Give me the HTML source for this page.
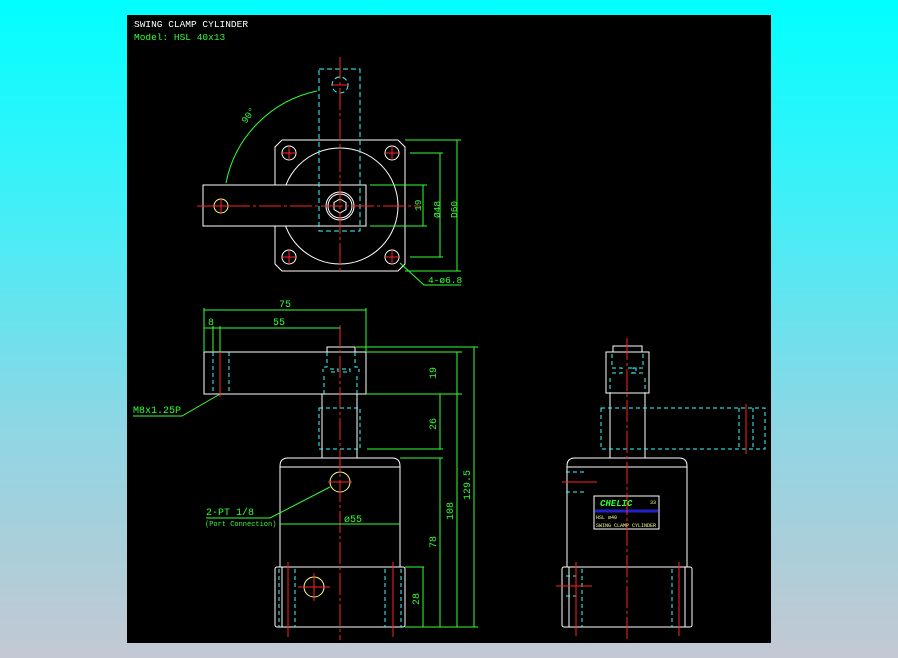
<!DOCTYPE html>
<html><head><meta charset="utf-8"><style>
html,body{margin:0;padding:0}
body{width:898px;height:658px;overflow:hidden;background:linear-gradient(180deg,#00ffff 0%,#3ff0f8 30%,#8fd6e4 65%,#b4ccd6 90%,#c4c8d4 100%)}
svg{position:absolute;left:0;top:0}
text{font-family:"Liberation Mono",monospace}
</style></head><body>
<svg width="898" height="658" viewBox="0 0 898 658" xmlns="http://www.w3.org/2000/svg">
<rect x="127" y="15" width="644" height="628" fill="#000"/>
<text x="134" y="27" fill="#fff" font-size="9.5">SWING CLAMP CYLINDER</text>
<text x="134" y="40" fill="#3f3" font-size="9.5">Model: HSL 40x13</text>

<g fill="none" stroke-width="1">
<!-- TOP VIEW -->
<g stroke="#fff">
<path d="M282 140 H398 L405 147 V264 L398 271 H282 L275 264 V147 Z"/>
<circle cx="340" cy="206" r="58"/>
<circle cx="289" cy="153" r="7"/><circle cx="392" cy="153" r="7"/>
<circle cx="289" cy="257" r="7"/><circle cx="392" cy="257" r="7"/>
<rect x="203" y="185" width="163" height="41" fill="#000"/>
<circle cx="340" cy="206" r="14"/><circle cx="340" cy="206" r="12"/>
<path d="M340 199 L346 202.5 V209.5 L340 213 L334 209.5 V202.5 Z"/>
</g>
<circle cx="221" cy="206" r="7" stroke="#ff8"/>
<g stroke="#3ff" stroke-dasharray="5,3">
<rect x="319" y="69" width="41" height="162"/>
<circle cx="340" cy="85" r="8"/>
</g>
<g stroke="#f22">
<path d="M340 57 V272" stroke-dasharray="22,3,3,3"/>
<path d="M197 206 H420" stroke-dasharray="22,3,3,3"/>
<path d="M282 153 H296 M289 146 V160 M385 153 H399 M392 146 V160 M282 257 H296 M289 250 V264 M385 257 H399 M392 250 V264 M214 206 H228 M221 198 V214 M332 85 H348"/>
</g>
<g stroke="#3f3">
<path d="M226 183 A117 117 0 0 1 317 91"/>
<path d="M370 185 H427 M370 226 H427 M423 185 V226 M410 153 H443 M410 257 H443 M440 153 V257 M405 140 H461 M405 271 H461 M457 140 V271"/>
<path d="M400 263 L424 285 H461"/>
</g>
<g fill="#3f3" font-size="9.5">
<text transform="translate(246,124) rotate(-55)">90°</text>
<text transform="translate(421,211) rotate(-90)">19</text>
<text transform="translate(440,218) rotate(-90)">Ø48</text>
<text transform="translate(457,218) rotate(-90)">D60</text>
<text x="428" y="283">4-ø6.8</text>
</g>

<!-- FRONT VIEW -->
<g stroke="#fff">
<rect x="204" y="352" width="162" height="42"/>
<path d="M327 352 V347 H355 V352"/>
<path d="M322 394 V458 M357 394 V458"/>
<path d="M280 567 V466 Q280 458 288 458 H392 Q400 458 400 466 V567 M280 467 H400"/>
<rect x="275" y="567" width="130" height="60" rx="2"/>
<path d="M282 567 V627"/>
</g>
<g stroke="#3ff" stroke-dasharray="4,3">
<path d="M213 352 V394 M229 352 V394"/>
<path d="M327 352 V367 H323 V372 M355 352 V367 H359 V372 M330 369 H338 V372 H330 M342 369 H350 V372 H342 M324 376 V394 M357 376 V394"/>
<rect x="319" y="408" width="41" height="41"/>
<path d="M279 569 V627 M295 569 V627 M385 569 V627 M401 569 V627"/>
</g>
<circle cx="340" cy="482" r="10" stroke="#ff8"/>
<circle cx="314" cy="587" r="10" stroke="#ff8"/>
<g stroke="#f22">
<path d="M340 325 V640" stroke-dasharray="22,3,3,3"/>
<path d="M220 345 V397 M288 562 V637 M393 562 V637 M328 482 H352 M298 587 H330 M314 573 V601"/>
</g>
<g stroke="#3f3">
<path d="M204 308 V352 M366 308 V352 M204 310 H366 M204 328 H340 M213 326 V352 M220 326 V352"/>
<path d="M356 347 H478 M366 352 H462 M366 394 H462 M367 449 H443 M400 458 H443 M405 567 H424 M405 627 H478"/>
<path d="M457 352 V627 M440 394 V449 M440 458 V627 M474 347 V627 M423 567 V627"/>
<path d="M280 524 H400"/>
<path d="M133 416 H182 L220 394"/>
<path d="M206 518 H270 L330 487"/>
</g>
<g fill="#3f3" font-size="10">
<text x="279" y="307">75</text>
<text x="208" y="325">8</text>
<text x="273" y="325">55</text>
<text x="133" y="413">M8x1.25P</text>
<text x="206" y="515">2-PT 1/8</text>
<text x="205" y="526" font-size="7">(Port Connection)</text>
<text x="344" y="522">ø55</text>
<text transform="translate(436,379) rotate(-90)">19</text>
<text transform="translate(436,430) rotate(-90)">26</text>
<text transform="translate(436,548) rotate(-90)">78</text>
<text transform="translate(453,520) rotate(-90)">108</text>
<text transform="translate(470,500) rotate(-90)">129.5</text>
<text transform="translate(419,605) rotate(-90)">28</text>
</g>

<!-- SIDE VIEW -->
<g stroke="#fff">
<path d="M613 352 V346 H642 V352"/>
<rect x="606" y="352" width="43" height="41"/>
<path d="M610 393 V458 M645 393 V458"/>
<path d="M567 567 V466 Q567 458 575 458 H679 Q687 458 687 466 V567 M567 467 H687"/>
<rect x="562" y="567" width="130" height="60" rx="2"/>
<path d="M569 567 V627 M685 567 V627"/>
<rect x="594" y="496" width="65" height="33"/>
</g>
<g stroke="#3ff" stroke-dasharray="4,3">
<path d="M612 354 V368 M643 354 V368 M612 368 H622 V373 H612 M628 368 H636 V373 H628 M643 368 H633 V373 H643 M610 378 V393 M645 378 V393"/>
<rect x="601" y="408" width="164" height="41"/>
<path d="M739 408 V449 M753 408 V449"/>
<path d="M582 569 V627 M672 569 V627 M566 576 H576 M566 596 H576 M566 472 H586 M566 492 H586"/>
</g>
<path d="M595 511 H658" stroke="#22c" stroke-width="3"/>
<g stroke="#f22">
<path d="M627 338 V640" stroke-dasharray="22,3,3,3"/>
<path d="M746 404 V454 M576 562 V636 M679 562 V636 M562 482 H597 M556 586 H592"/>
</g>
<text x="600" y="506" fill="#3f3" font-size="9" font-weight="bold" font-style="italic" font-family="Liberation Sans,sans-serif">CHELIC</text>
<text x="650" y="504" fill="#ff8" font-size="5">33</text>
<text x="596" y="519" fill="#ff8" font-size="5">HSL ø40</text>
<text x="596" y="527" fill="#ff8" font-size="5">SWING CLAMP CYLINDER</text>
</g>
</svg>
</body></html>
